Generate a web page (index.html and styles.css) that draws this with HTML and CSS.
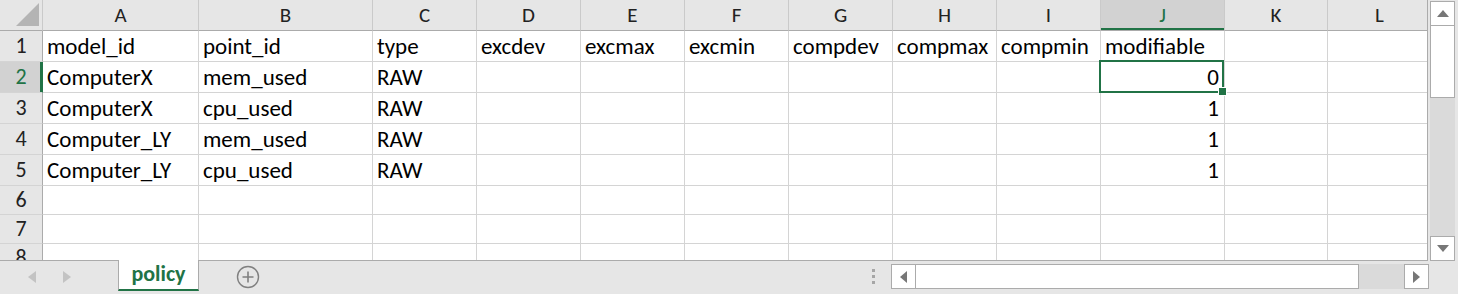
FILE: index.html
```html
<!DOCTYPE html>
<html lang="en">
<head>
  <meta charset="UTF-8" />
  <title>policy</title>
  <link rel="stylesheet" href="styles.css">
</head>
<body>
  <div class="app">
    <div class="main">
      <div class="sheet">
        <div class="row head">
          <div class="corner">
            <svg width="43" height="31" viewBox="0 0 43 31"><polygon points="39,4 39,27 16,27" fill="#b4b4b4"/></svg>
          </div>
          <div class="col">A</div><div class="col">B</div><div class="col">C</div><div class="col">D</div>
          <div class="col">E</div><div class="col">F</div><div class="col">G</div><div class="col">H</div>
          <div class="col">I</div><div class="col active">J</div><div class="col">K</div><div class="col">L</div>
        </div>
        <div class="row">
          <div class="num">1</div>
          <div class="cell">model_id</div><div class="cell">point_id</div><div class="cell">type</div><div class="cell">excdev</div>
          <div class="cell">excmax</div><div class="cell">excmin</div><div class="cell">compdev</div><div class="cell">compmax</div>
          <div class="cell">compmin</div><div class="cell">modifiable</div><div class="cell"></div><div class="cell"></div>
        </div>
        <div class="row">
          <div class="num active">2</div>
          <div class="cell">ComputerX</div><div class="cell">mem_used</div><div class="cell">RAW</div><div class="cell"></div>
          <div class="cell"></div><div class="cell"></div><div class="cell"></div><div class="cell"></div>
          <div class="cell"></div><div class="cell value selected">0</div><div class="cell"></div><div class="cell"></div>
        </div>
        <div class="row">
          <div class="num">3</div>
          <div class="cell">ComputerX</div><div class="cell">cpu_used</div><div class="cell">RAW</div><div class="cell"></div>
          <div class="cell"></div><div class="cell"></div><div class="cell"></div><div class="cell"></div>
          <div class="cell"></div><div class="cell value">1</div><div class="cell"></div><div class="cell"></div>
        </div>
        <div class="row">
          <div class="num">4</div>
          <div class="cell">Computer_LY</div><div class="cell">mem_used</div><div class="cell">RAW</div><div class="cell"></div>
          <div class="cell"></div><div class="cell"></div><div class="cell"></div><div class="cell"></div>
          <div class="cell"></div><div class="cell value">1</div><div class="cell"></div><div class="cell"></div>
        </div>
        <div class="row">
          <div class="num">5</div>
          <div class="cell">Computer_LY</div><div class="cell">cpu_used</div><div class="cell">RAW</div><div class="cell"></div>
          <div class="cell"></div><div class="cell"></div><div class="cell"></div><div class="cell"></div>
          <div class="cell"></div><div class="cell value">1</div><div class="cell"></div><div class="cell"></div>
        </div>
        <div class="row short">
          <div class="num">6</div>
          <div class="cell"></div><div class="cell"></div><div class="cell"></div><div class="cell"></div>
          <div class="cell"></div><div class="cell"></div><div class="cell"></div><div class="cell"></div>
          <div class="cell"></div><div class="cell"></div><div class="cell"></div><div class="cell"></div>
        </div>
        <div class="row short">
          <div class="num">7</div>
          <div class="cell"></div><div class="cell"></div><div class="cell"></div><div class="cell"></div>
          <div class="cell"></div><div class="cell"></div><div class="cell"></div><div class="cell"></div>
          <div class="cell"></div><div class="cell"></div><div class="cell"></div><div class="cell"></div>
        </div>
        <div class="row short">
          <div class="num">8</div>
          <div class="cell"></div><div class="cell"></div><div class="cell"></div><div class="cell"></div>
          <div class="cell"></div><div class="cell"></div><div class="cell"></div><div class="cell"></div>
          <div class="cell"></div><div class="cell"></div><div class="cell"></div><div class="cell"></div>
        </div>
      </div>

      <div class="vscroll">
        <div class="sbtn">
          <svg width="12" height="7" viewBox="0 0 12 7"><polygon points="6,0 12,7 0,7" fill="#777"/></svg>
        </div>
        <div class="vthumb"></div>
        <div class="vtrack"></div>
        <div class="sbtn">
          <svg width="12" height="7" viewBox="0 0 12 7"><polygon points="0,0 12,0 6,7" fill="#777"/></svg>
        </div>
      </div>
    </div>

    <div class="bar">
      <div class="nav">
        <svg width="8" height="12" viewBox="0 0 8 12"><polygon points="8,0 8,12 0,6" fill="#c3c3c3"/></svg>
        <svg width="8" height="12" viewBox="0 0 8 12"><polygon points="0,0 0,12 8,6" fill="#c3c3c3"/></svg>
      </div>
      <div class="tab">policy</div>
      <div class="add">
        <svg width="24" height="24" viewBox="0 0 24 24">
          <circle cx="12" cy="12" r="10.5" fill="none" stroke="#808080" stroke-width="1.4"/>
          <path d="M12 6.5v11M6.5 12h11" stroke="#808080" stroke-width="1.6"/>
        </svg>
      </div>
      <div class="dots"><span></span><span></span><span></span></div>
      <div class="hscroll">
        <div class="sbtn">
          <svg width="7" height="12" viewBox="0 0 7 12"><polygon points="7,0 7,12 0,6" fill="#777"/></svg>
        </div>
        <div class="hthumb"></div>
        <div class="htrack"></div>
        <div class="sbtn">
          <svg width="7" height="12" viewBox="0 0 7 12"><polygon points="0,0 0,12 7,6" fill="#777"/></svg>
        </div>
      </div>
    </div>
  </div>
</body>
</html>
```
FILE: styles.css
```css
* {
  box-sizing: border-box;
}

body {
  margin: 0;
  background: #e6e6e6;
  font-family: Calibri, Carlito, Lato, 'Liberation Sans', sans-serif;
  color: #000;
}

.app {
  width: 1458px;
  height: 294px;
  display: flex;
  flex-direction: column;
  background: #e6e6e6;
  overflow: hidden;
}

.main {
  display: flex;
  height: 261px;
}

/* grid */

.sheet {
  width: 1428px;
  height: 261px;
  overflow: hidden;
  background: #fff;
  border-right: 1px solid #ababab;
  border-bottom: 1px solid #ababab;
}

.row {
  display: grid;
  grid-template-columns: 43px 156px 174px repeat(7, 104px) 124px 103px 104px;
  height: 31px;
}

.row.short {
  height: 29px;
}

.cell,
.num,
.col,
.corner {
  border-right: 1px solid #d4d4d4;
  border-bottom: 1px solid #d4d4d4;
  white-space: nowrap;
  line-height: 30px;
  font-size: 23px;
}

.short .cell,
.short .num {
  line-height: 28px;
}

.cell {
  padding: 0 4px;
  position: relative;
}

.cell.value {
  text-align: right;
  padding-right: 5px;
}

.cell.selected::after {
  content: "";
  position: absolute;
  left: -2px;
  top: -2px;
  right: 0;
  bottom: -1px;
  border: 2px solid #217346;
}

.cell.selected::before {
  content: "";
  position: absolute;
  right: -3px;
  bottom: -4px;
  width: 7px;
  height: 7px;
  background: #217346;
  border: 1px solid #fff;
  z-index: 2;
}

.head .col,
.corner {
  background: #e6e6e6;
  border-right-color: #cacaca;
  border-bottom-color: #ababab;
  text-align: center;
  font-size: 21px;
  color: #222;
}

.corner svg {
  display: block;
  margin: -1px 0 0;
}

.num {
  background: #e6e6e6;
  border-right-color: #ababab;
  text-align: center;
  font-size: 22px;
  color: #222;
}

.col.active {
  background: #d2d2d2;
  color: #217346;
  box-shadow: inset 0 -2px 0 #217346;
}

.num.active {
  background: #d2d2d2;
  color: #217346;
  box-shadow: inset -2px 0 0 #217346;
  border-right-color: #217346;
}

/* scroll bars */

.vscroll {
  width: 25px;
  margin: 1px 0 0 2px;
  display: flex;
  flex-direction: column;
}

.sbtn {
  width: 25px;
  height: 25px;
  background: #fff;
  border: 1px solid #ababab;
  display: flex;
  align-items: center;
  justify-content: center;
  flex-shrink: 0;
}

.vthumb {
  height: 72px;
  background: #fff;
  border: 1px solid #ababab;
  border-top: 0;
}

.vtrack {
  flex: 1;
  background: #dadada;
}

.bar {
  display: flex;
  align-items: flex-start;
  height: 33px;
}

.nav {
  width: 118px;
  display: flex;
  align-items: center;
  gap: 27px;
  padding: 10px 0 0 28px;
}

.tab {
  width: 81px;
  height: 31px;
  margin-top: -1px;
  background: #fff;
  border-left: 1px solid #ababab;
  border-right: 1px solid #ababab;
  border-bottom: 2px solid #217346;
  color: #217346;
  font-weight: bold;
  font-size: 22px;
  text-align: center;
  line-height: 27px;
}

.add {
  margin: 4px 0 0 37px;
}

.add svg {
  display: block;
}

.dots {
  margin: 8px 16px 0 auto;
  display: flex;
  flex-direction: column;
  gap: 3px;
}

.dots span {
  width: 3px;
  height: 3px;
  background: #a6a6a6;
}

.hscroll {
  width: 538px;
  height: 25px;
  margin: 3px 29px 0 0;
  display: flex;
}

.hthumb {
  width: 443px;
  background: #fff;
  border: 1px solid #ababab;
  border-left: 0;
}

.htrack {
  flex: 1;
  background: #dadada;
}
```
